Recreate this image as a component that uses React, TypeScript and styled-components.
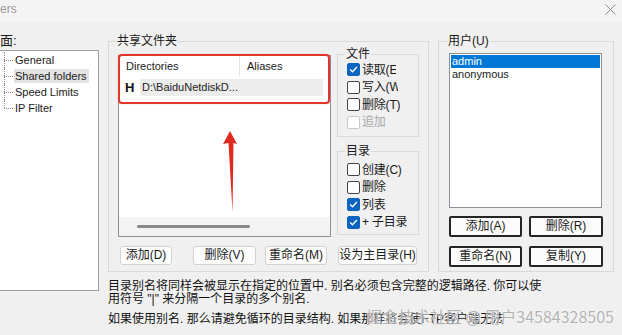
import React from "react";
import styled, { createGlobalStyle } from "styled-components";

const GlobalStyle = createGlobalStyle`
  html, body { margin: 0; padding: 0; background: #f0f0f0; }
  body {
    font-family: "Liberation Sans", "Noto Sans CJK SC", sans-serif;
    color: #1a1a1a;
  }
  * { box-sizing: border-box; }
`;

const Window = styled.div`
  width: 622px;
  height: 335px;
  overflow: hidden;
  background: #f0f0f0;
  display: flex;
  flex-direction: column;
`;

const TitleBar = styled.div`
  height: 22px;
  flex: none;
  display: flex;
  align-items: center;
  justify-content: space-between;
  padding: 0 6px 4px 0;
  background: #f4f4f4;
`;

const TitleText = styled.span`
  font-size: 12px;
  line-height: 14px;
  color: #9a9a9a;
`;

const Main = styled.div`
  display: flex;
  padding-top: 12px;
  flex: 1;
`;

const LeftCol = styled.div`
  width: 100px;
  margin-left: -1px;
  flex: none;
  display: flex;
  flex-direction: column;
`;

const PaneLabel = styled.div`
  font-size: 13px;
  line-height: 14px;
  height: 14px;
  padding-left: 1px;
`;

const Tree = styled.div`
  margin-top: 2px;
  height: 241px;
  background: #fff;
  border: 1px solid #a0a0a0;
  padding: 1px 0 0 4px;
`;

const TreeItem = styled.div<{ $last?: boolean }>`
  position: relative;
  height: 16px;
  line-height: 16px;
  font-size: 11px;
  padding-left: 10px;
  &::before {
    content: "";
    position: absolute;
    left: 0;
    top: 8px;
    width: 9px;
    border-top: 1px dotted #8a8a8a;
  }
  &::after {
    content: "";
    position: absolute;
    left: 0;
    top: 0;
    height: ${(p) => (p.$last ? "8px" : "16px")};
    border-left: 1px dotted #8a8a8a;
  }
`;

const TreeText = styled.span<{ $selected?: boolean }>`
  padding: 1px 2px 1px 1px;
  background: ${(p) => (p.$selected ? "#e3e3e3" : "transparent")};
`;

const RightCol = styled.div`
  margin-left: 9px;
  display: flex;
  flex-direction: column;
`;

const GroupsRow = styled.div`
  display: flex;
  align-items: flex-start;
`;

const Group = styled.fieldset<{ $w: number; $pad: string; $ml?: number; $mt?: number }>`
  width: ${(p) => p.$w}px;
  margin: ${(p) => p.$mt ?? 0}px 0 0 ${(p) => p.$ml ?? 0}px;
  padding: ${(p) => p.$pad};
  border: 1px solid #d9d9d9;
  min-width: 0;
`;

const Legend = styled.legend<{ $lh?: number }>`
  font-size: 12px;
  line-height: ${(p) => p.$lh ?? 14}px;
  padding: 0 1px;
  margin-left: -2px;
  color: #1a1a1a;
`;

const TopRow = styled.div`
  display: flex;
  align-items: flex-start;
`;

const DirList = styled.div`
  position: relative;
  margin-top: 7px;
  width: 213px;
  height: 182px;
  background: #fff;
  border: 1px solid #8a8f98;
  display: flex;
  flex-direction: column;
`;

const ListHeader = styled.div`
  display: flex;
  height: 21px;
`;

const HeaderCell = styled.div<{ $w: number; $divider?: boolean }>`
  width: ${(p) => p.$w}px;
  padding-left: 7px;
  font-size: 11px;
  line-height: 21px;
  color: #222;
  border-right: ${(p) => (p.$divider ? "1px solid #e5e5e5" : "none")};
`;

const DirRow = styled.div`
  display: flex;
  align-items: center;
  height: 17px;
  margin-top: 2px;
  padding-left: 6px;
`;

const DriveIcon = styled.span`
  width: 15px;
  font-size: 13px;
  font-weight: bold;
  line-height: 17px;
  color: #111;
`;

const DirPath = styled.span`
  width: 183px;
  height: 17px;
  padding-left: 2px;
  font-size: 11px;
  line-height: 17px;
  background: #ececec;
  color: #222;
`;

const ScrollTrack = styled.div`
  margin-top: auto;
  height: 19px;
  background: #f3f3f3;
  display: flex;
  align-items: center;
  padding-left: 18px;
`;

const ScrollThumb = styled.div`
  width: 113px;
  height: 3px;
  border-radius: 2px;
  background: #8a8a8a;
`;

const RedFrame = styled.div`
  position: absolute;
  left: -1px;
  top: -2px;
  width: 212px;
  height: 50px;
  border: 2px solid #e2352b;
  border-radius: 4px;
  box-shadow: 0 0 1px rgba(226, 53, 43, 0.6);
`;

const ArrowSvg = styled.svg`
  position: absolute;
  left: 99px;
  top: 71px;
`;

const PermsCol = styled.div`
  margin-left: 6px;
  display: flex;
  flex-direction: column;
`;

const PermRow = styled.div`
  display: flex;
  align-items: center;
  height: 17.5px;
  gap: 2px;
`;

const Check = styled.span<{ $checked?: boolean; $disabled?: boolean }>`
  width: 13px;
  height: 13px;
  flex: none;
  border-radius: 2px;
  display: flex;
  align-items: center;
  justify-content: center;
  background: ${(p) => (p.$checked ? "#0a64c0" : "#fff")};
  border: 1px solid ${(p) => (p.$checked ? "#0a64c0" : p.$disabled ? "#c8c8c8" : "#444")};
`;

const PermLabel = styled.span<{ $disabled?: boolean; $clip?: number }>`
  font-size: 12px;
  line-height: 14px;
  white-space: nowrap;
  overflow: hidden;
  letter-spacing: -0.2px;
  ${(p) => (p.$clip ? `width: ${p.$clip}px;` : "")}
  color: ${(p) => (p.$disabled ? "#a8a8a8" : "#1a1a1a")};
`;

const ButtonRow = styled.div`
  display: flex;
  margin-top: 9px;
`;

const FlatButton = styled.button<{ $w: number; $ml: number }>`
  width: ${(p) => p.$w}px;
  margin-left: ${(p) => p.$ml}px;
  height: 19px;
  padding: 0;
  border: 1px solid #d2d2d2;
  border-radius: 3px;
  background: #fdfdfd;
  font-family: inherit;
  font-size: 12px;
  line-height: 17px;
  color: #1a1a1a;
  white-space: nowrap;
`;

const UserList = styled.div`
  margin-top: 5px;
  width: 153px;
  height: 155px;
  background: #fff;
  border: 1px solid #8a8f98;
  padding: 1px;
`;

const UserItem = styled.div<{ $selected?: boolean }>`
  height: 13px;
  line-height: 13px;
  font-size: 11px;
  padding-left: 1px;
  background: ${(p) => (p.$selected ? "#0078d7" : "transparent")};
  color: ${(p) => (p.$selected ? "#fff" : "#1a1a1a")};
`;

const UserButtons = styled.div`
  margin-top: 8px;
  display: grid;
  grid-template-columns: 73px 74px;
  column-gap: 7px;
  row-gap: 9px;
`;

const DialogButton = styled.button`
  height: 21px;
  padding: 0;
  border: 2px solid #242424;
  border-radius: 2px;
  background: #fcfcfc;
  font-family: inherit;
  font-size: 12px;
  line-height: 17px;
  color: #1a1a1a;
  white-space: nowrap;
`;

const Notes = styled.div`
  position: relative;
  margin-top: 8px;
  font-size: 12px;
  line-height: 13px;
  color: #111;
  white-space: nowrap;
`;

const NoteLine = styled.div<{ $mt?: number }>`
  margin-top: ${(p) => p.$mt ?? 0}px;
`;

const Watermark = styled.div`
  position: absolute;
  left: 258px;
  top: 27px;
  font-family: "Noto Sans CJK SC", sans-serif;
  font-size: 16px;
  line-height: 18px;
  color: rgba(115, 115, 115, 0.55);
  text-shadow: 0 0 1px rgba(255, 255, 255, 0.9), 0 0 2px rgba(255, 255, 255, 0.7);
  white-space: nowrap;
`;

const CheckMark = () => (
  <svg width="9" height="9" viewBox="0 0 9 9">
    <path d="M1.2 4.6 L3.5 6.8 L7.9 2" fill="none" stroke="#fff" strokeWidth="1.4" />
  </svg>
);

const Perm = ({
  label,
  checked,
  disabled,
  clip,
}: {
  label: string;
  checked?: boolean;
  disabled?: boolean;
  clip?: number;
}) => (
  <PermRow>
    <Check $checked={checked} $disabled={disabled}>
      {checked && <CheckMark />}
    </Check>
    <PermLabel $disabled={disabled} $clip={clip}>
      {label}
    </PermLabel>
  </PermRow>
);

export default function App() {
  return (
    <>
      <GlobalStyle />
      <Window>
        <TitleBar>
          <TitleText>ers</TitleText>
          <svg width="11" height="11" viewBox="0 0 11 11">
            <path d="M0.5 0.5 L10.5 10.5 M10.5 0.5 L0.5 10.5" stroke="#8c8c8c" strokeWidth="1" />
          </svg>
        </TitleBar>
        <Main>
          <LeftCol>
            <PaneLabel>面:</PaneLabel>
            <Tree>
              <TreeItem><TreeText>General</TreeText></TreeItem>
              <TreeItem><TreeText $selected>Shared folders</TreeText></TreeItem>
              <TreeItem><TreeText>Speed Limits</TreeText></TreeItem>
              <TreeItem $last><TreeText>IP Filter</TreeText></TreeItem>
            </Tree>
          </LeftCol>
          <RightCol>
            <GroupsRow>
              <Group $w={321} $pad="0 0 6px 9px">
                <Legend>共享文件夹</Legend>
                <TopRow>
                  <DirList>
                    <ListHeader>
                      <HeaderCell $w={121} $divider>Directories</HeaderCell>
                      <HeaderCell $w={90}>Aliases</HeaderCell>
                    </ListHeader>
                    <DirRow>
                      <DriveIcon>H</DriveIcon>
                      <DirPath>D:\BaiduNetdiskD...</DirPath>
                    </DirRow>
                    <ScrollTrack>
                      <ScrollThumb />
                    </ScrollTrack>
                    <RedFrame />
                    <ArrowSvg width="30" height="92" viewBox="0 0 30 92">
                      <polygon points="12,4 19,17 15.5,16 14.5,85 10.5,16 5,17" fill="#e12a1f" />
                    </ArrowSvg>
                  </DirList>
                  <PermsCol>
                    <Group $w={82} $pad="1px 0 5px 9px">
                      <Legend $lh={12}>文件</Legend>
                      <Perm label="读取(E)" checked clip={34} />
                      <Perm label="写入(W)" clip={36} />
                      <Perm label="删除(T)" />
                      <Perm label="追加" disabled />
                    </Group>
                    <Group $w={82} $pad="4px 0 3px 9px" $mt={8}>
                      <Legend $lh={12}>目录</Legend>
                      <Perm label="创建(C)" />
                      <Perm label="删除" />
                      <Perm label="列表" checked />
                      <Perm label="+ 子目录" checked />
                    </Group>
                  </PermsCol>
                </TopRow>
                <ButtonRow>
                  <FlatButton $w={52} $ml={2}>添加(D)</FlatButton>
                  <FlatButton $w={63} $ml={21}>删除(V)</FlatButton>
                  <FlatButton $w={62} $ml={9}>重命名(M)</FlatButton>
                  <FlatButton $w={79} $ml={11}>设为主目录(H)</FlatButton>
                </ButtonRow>
              </Group>
              <Group $w={176} $pad="0 0 4px 10px" $ml={9}>
                <Legend>用户(U)</Legend>
                <UserList>
                  <UserItem $selected>admin</UserItem>
                  <UserItem>anonymous</UserItem>
                </UserList>
                <UserButtons>
                  <DialogButton>添加(A)</DialogButton>
                  <DialogButton>删除(R)</DialogButton>
                  <DialogButton>重命名(N)</DialogButton>
                  <DialogButton>复制(Y)</DialogButton>
                </UserButtons>
              </Group>
            </GroupsRow>
            <Notes>
              <NoteLine>目录别名将同样会被显示在指定的位置中. 别名必须包含完整的逻辑路径. 你可以使</NoteLine>
              <NoteLine>用符号 "|" 来分隔一个目录的多个别名.</NoteLine>
              <NoteLine $mt={7}>如果使用别名. 那么请避免循环的目录结构. 如果那样将会使FTP客户端无法</NoteLine>
              <Watermark>掘金技术社区 @ 用户34584328505</Watermark>
            </Notes>
          </RightCol>
        </Main>
      </Window>
    </>
  );
}
